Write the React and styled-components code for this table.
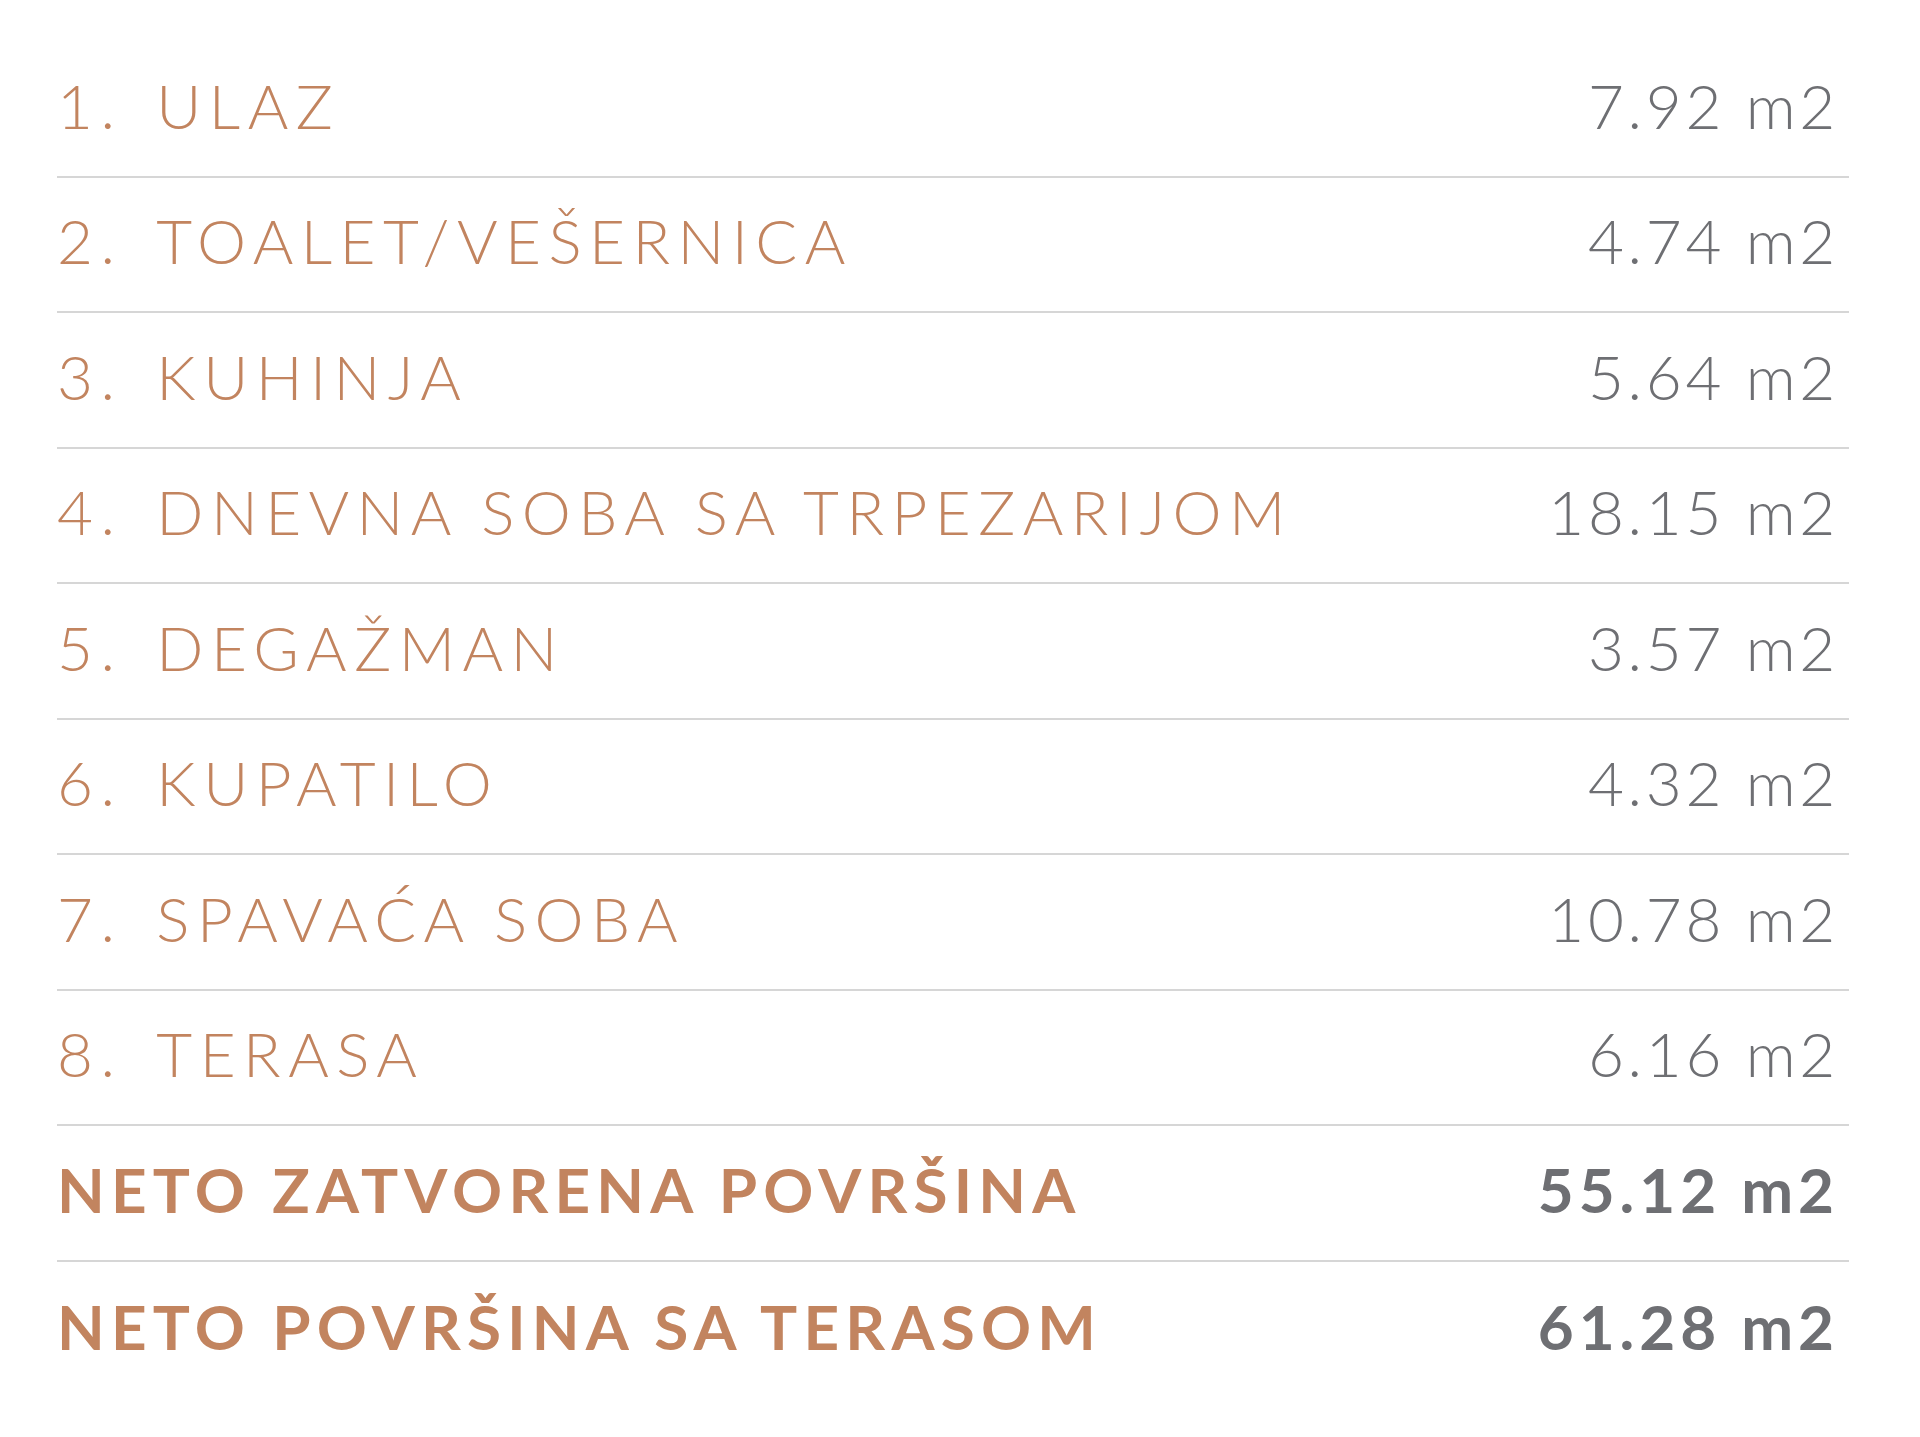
import styled, { createGlobalStyle } from 'styled-components';

const rooms = [
    { label: "ULAZ", area: "7.92" },
    { label: "TOALET/VEŠERNICA", area: "4.74" },
    { label: "KUHINJA", area: "5.64" },
    { label: "DNEVNA SOBA SA TRPEZARIJOM", area: "18.15" },
    { label: "DEGAŽMAN", area: "3.57" },
    { label: "KUPATILO", area: "4.32" },
    { label: "SPAVAĆA SOBA", area: "10.78" },
    { label: "TERASA", area: "6.16" },
];

const totals = [
    { label: "NETO ZATVORENA POVRŠINA", area: "55.12" },
    { label: "NETO POVRŠINA SA TERASOM", area: "61.28" },
];

function App () {
    return (
        <>
            <Global />
            <Table>
                {rooms.map((room, i) => (
                    <Row key={room.label}>
                        <Name>
                            <Num>{i + 1}.</Num>
                            {room.label}
                        </Name>
                        <Area>{room.area} m2</Area>
                    </Row>
                ))}
                {totals.map((t, i) => (
                    <Row key={t.label} $last={i === totals.length - 1}>
                        <Name $bold>{t.label}</Name>
                        <Area $bold>{t.area} m2</Area>
                    </Row>
                ))}
            </Table>
        </>
    );
}

const Global = createGlobalStyle`
    body {
        margin: 0;
        background: #ffffff;
        font-family: Lato, "Open Sans", sans-serif;
    }
`;

const Table = styled.div`
    display: flex;
    flex-direction: column;
    width: 1849px;
    padding: 42px 0 0 57px;
    height: 1437px;
    box-sizing: border-box;
`;

const Row = styled.div`
    display: flex;
    flex-direction: row;
    justify-content: space-between;
    align-items: flex-end;
    height: 135.5px;
    box-sizing: border-box;
    padding-bottom: 40px;
    border-bottom: ${({ $last }) => ($last ? "none" : "2.5px solid #d6d6d6")};
`;

const Name = styled.div`
    color: #c2845f;
    font-size: 62px;
    line-height: 1;
    font-weight: ${({ $bold }) => ($bold ? 700 : 300)};
    letter-spacing: ${({ $bold }) => ($bold ? "0.1em" : "0.12em")};
    white-space: nowrap;
`;

const Num = styled.span`
    margin-right: 34px;
`;

const Area = styled.div`
    color: #6e6f73;
    font-size: 62px;
    line-height: 1;
    font-weight: ${({ $bold }) => ($bold ? 700 : 300)};
    letter-spacing: ${({ $bold }) => ($bold ? "0.08em" : "0.06em")};
    padding-right: 10px;
    white-space: nowrap;
`;

export default App;
